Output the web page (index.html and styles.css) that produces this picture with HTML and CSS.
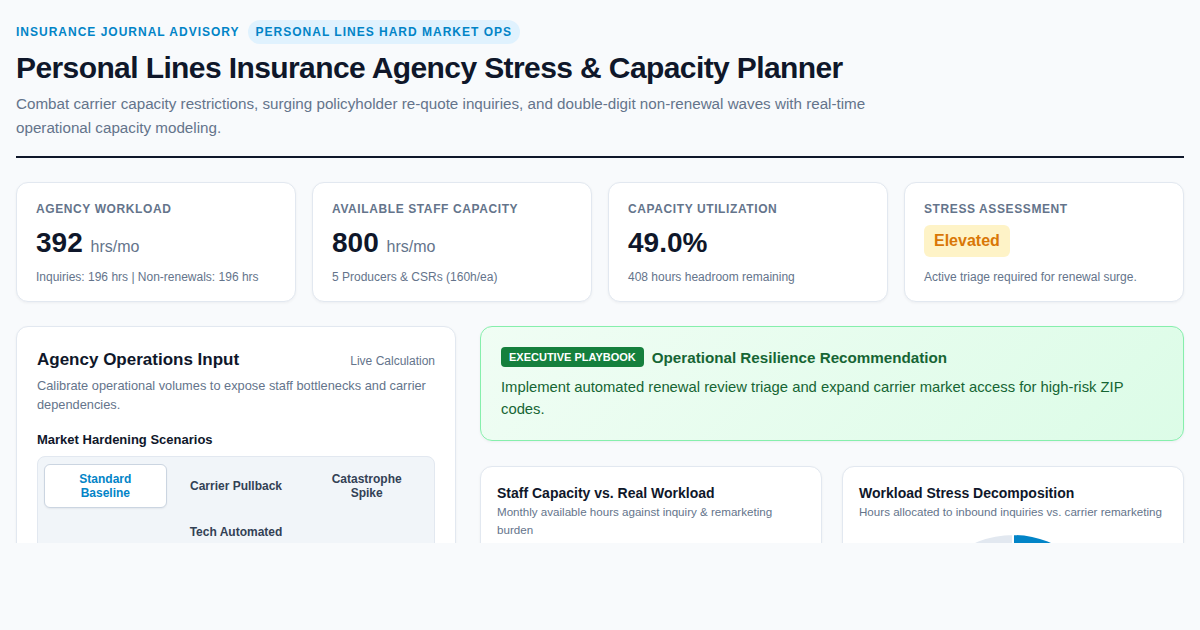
FILE: index.html
```html
<!DOCTYPE html>
<html lang="en">
<head>
  <meta charset="UTF-8" />
  <meta name="viewport" content="width=device-width, initial-scale=1.0" />
  <title>Personal Lines Insurance Agency Stress &amp; Capacity Planner</title>
  <link rel="stylesheet" href="styles.css">
</head>
<body>
  <div class="page">
    <header class="header">
      <div class="eyebrow">
        <span>Insurance Journal Advisory</span>
        <span class="pill">Personal Lines Hard Market Ops</span>
      </div>
      <h1>Personal Lines Insurance Agency Stress &amp; Capacity Planner</h1>
      <p class="lead">Combat carrier capacity restrictions, surging policyholder re-quote inquiries, and double-digit non-renewal waves with real-time operational capacity modeling.</p>
    </header>

    <section class="kpis">
      <div class="kpi">
        <div class="kpi-label">Agency Workload</div>
        <div class="kpi-value">392 <span class="unit">hrs/mo</span></div>
        <div class="kpi-sub">Inquiries: 196 hrs | Non-renewals: 196 hrs</div>
      </div>
      <div class="kpi">
        <div class="kpi-label">Available Staff Capacity</div>
        <div class="kpi-value">800 <span class="unit">hrs/mo</span></div>
        <div class="kpi-sub">5 Producers &amp; CSRs (160h/ea)</div>
      </div>
      <div class="kpi">
        <div class="kpi-label">Capacity Utilization</div>
        <div class="kpi-value">49.0%</div>
        <div class="kpi-sub">408 hours headroom remaining</div>
      </div>
      <div class="kpi">
        <div class="kpi-label">Stress Assessment</div>
        <div class="kpi-value"><span class="badge-elevated">Elevated</span></div>
        <div class="kpi-sub">Active triage required for renewal surge.</div>
      </div>
    </section>

    <section class="main-grid">
      <div class="panel">
        <div class="panel-head">
          <h2>Agency Operations Input</h2>
          <span class="live">Live Calculation</span>
        </div>
        <p class="panel-desc">Calibrate operational volumes to expose staff bottlenecks and carrier dependencies.</p>
        <h3 class="field-title">Market Hardening Scenarios</h3>
        <div class="scenarios">
          <button class="scenario active">Standard Baseline</button>
          <button class="scenario">Carrier Pullback</button>
          <button class="scenario">Catastrophe Spike</button>
          <button class="scenario">Tech Automated</button>
        </div>
      </div>

      <div class="right-col">
        <div class="playbook">
          <div class="playbook-head">
            <span class="playbook-tag">Executive Playbook</span>
            <span class="playbook-title">Operational Resilience Recommendation</span>
          </div>
          <p class="playbook-text">Implement automated renewal review triage and expand carrier market access for high-risk ZIP codes.</p>
        </div>

        <div class="charts">
          <div class="chart-card">
            <h4>Staff Capacity vs. Real Workload</h4>
            <p class="chart-sub">Monthly available hours against inquiry &amp; remarketing burden</p>
          </div>
          <div class="chart-card">
            <h4>Workload Stress Decomposition</h4>
            <p class="chart-sub">Hours allocated to inbound inquiries vs. carrier remarketing</p>
            <svg class="pie" width="200" height="200" viewBox="0 0 200 200">
              <path d="M100 100 L100 5 A95 95 0 0 1 100 195 Z" fill="#0284c7" stroke="#fff" stroke-width="2"/>
              <path d="M100 100 L100 195 A95 95 0 0 1 100 5 Z" fill="#e2e8f0" stroke="#fff" stroke-width="2"/>
            </svg>
          </div>
        </div>
      </div>
    </section>
  </div>
</body>
</html>
```

FILE: styles.css
```css
html {
  background: #f8fafc;
}
body {
  margin: 0;
  font-family: "Liberation Sans", Arial, sans-serif;
  color: #0f172a;
  background: #f8fafc;
}
.page {
  height: 543px;
  overflow: hidden;
  padding: 20px 16px 0;
  box-sizing: border-box;
}
.header {
  border-bottom: 2px solid #0f172a;
  padding-bottom: 16px;
}
.eyebrow {
  display: flex;
  align-items: center;
  gap: 8px;
  font-size: 12px;
  font-weight: bold;
  letter-spacing: 1px;
  text-transform: uppercase;
  color: #0284c7;
}
.pill {
  background: #e0f2fe;
  padding: 5px 8px;
  border-radius: 999px;
}
h1 {
  margin: 6px 0 6px;
  font-size: 30px;
  letter-spacing: -0.6px;
  line-height: 36px;
}
.lead {
  margin: 0;
  max-width: 880px;
  font-size: 15.2px;
  line-height: 24px;
  color: #64748b;
}
.kpis {
  display: grid;
  grid-template-columns: repeat(4, 1fr);
  gap: 16px;
  margin-top: 24px;
}
.kpi {
  background: #fff;
  border: 1px solid #e2e8f0;
  border-radius: 12px;
  padding: 19px 19px 16px;
  box-shadow: 0 1px 3px rgba(15, 23, 42, 0.05);
}
.kpi-label {
  font-size: 12px;
  font-weight: bold;
  letter-spacing: 0.6px;
  text-transform: uppercase;
  color: #64748b;
}
.kpi-value {
  margin-top: 10px;
  height: 34px;
  font-size: 28px;
  font-weight: bold;
  line-height: 34px;
}
.unit {
  font-size: 16px;
  font-weight: normal;
  color: #64748b;
}
.badge-elevated {
  display: inline-block;
  background: #fef3c7;
  color: #d97706;
  font-size: 16px;
  line-height: 24px;
  padding: 4px 10px;
  border-radius: 6px;
  vertical-align: top;
  margin-top: -1px;
}
.kpi-sub {
  margin-top: 9px;
  font-size: 12px;
  line-height: 16px;
  color: #64748b;
}
.main-grid {
  display: grid;
  grid-template-columns: 440px 1fr;
  gap: 24px;
  margin-top: 24px;
  align-items: start;
}
.panel {
  background: #fff;
  border: 1px solid #e2e8f0;
  border-radius: 12px;
  padding: 21px 20px 24px;
  box-shadow: 0 1px 3px rgba(15, 23, 42, 0.05);
}
.panel-head {
  display: flex;
  justify-content: space-between;
  align-items: baseline;
}
.panel-head h2 {
  margin: 0;
  font-size: 17px;
  line-height: 24px;
}
.live {
  font-size: 12px;
  color: #64748b;
}
.panel-desc {
  margin: 4px 0 0;
  font-size: 12.8px;
  line-height: 19px;
  color: #64748b;
}
.field-title {
  margin: 17px 0 7px;
  font-size: 13px;
  line-height: 18px;
}
.scenarios {
  display: flex;
  flex-wrap: wrap;
  justify-content: center;
  gap: 9px 8px;
  background: #f1f5f9;
  border: 1px solid #e2e8f0;
  border-radius: 8px;
  padding: 7px 6px;
}
.scenario {
  flex: 0 0 calc((100% - 16px) / 3);
  font-family: inherit;
  font-size: 12px;
  font-weight: bold;
  line-height: 14px;
  color: #334155;
  background: transparent;
  border: 1px solid transparent;
  border-radius: 6px;
  padding: 7px 10px;
}
.scenario.active {
  background: #fff;
  border-color: #cbd5e1;
  color: #0284c7;
  box-shadow: 0 1px 2px rgba(15, 23, 42, 0.06);
}
.right-col {
  display: flex;
  flex-direction: column;
  gap: 25px;
}
.playbook {
  background: linear-gradient(135deg, #f0fdf4, #dcfce7);
  border: 1px solid #86efac;
  border-radius: 12px;
  padding: 20px 20px 20px;
  color: #166534;
  box-shadow: 0 1px 3px rgba(15, 23, 42, 0.05);
}
.playbook-head {
  display: flex;
  align-items: center;
  gap: 8px;
}
.playbook-tag {
  background: #15803d;
  color: #fff;
  font-size: 11px;
  font-weight: bold;
  text-transform: uppercase;
  padding: 4px 8px;
  border-radius: 4px;
  line-height: 12px;
}
.playbook-title {
  font-size: 15.2px;
  font-weight: bold;
}
.playbook-text {
  margin: 9px 0 0;
  font-size: 14.8px;
  line-height: 22px;
}
.charts {
  display: grid;
  grid-template-columns: 1fr 1fr;
  gap: 20px;
}
.chart-card {
  background: #fff;
  border: 1px solid #e2e8f0;
  border-radius: 12px;
  padding: 17px 16px 16px;
  height: 300px;
  box-shadow: 0 1px 3px rgba(15, 23, 42, 0.05);
}
.chart-card h4 {
  margin: 0;
  font-size: 14px;
  line-height: 18px;
}
.chart-sub {
  margin: 1px 0 0;
  font-size: 11.6px;
  line-height: 18px;
  color: #64748b;
}
.pie {
  display: block;
  margin: 8px auto 0;
}
```
